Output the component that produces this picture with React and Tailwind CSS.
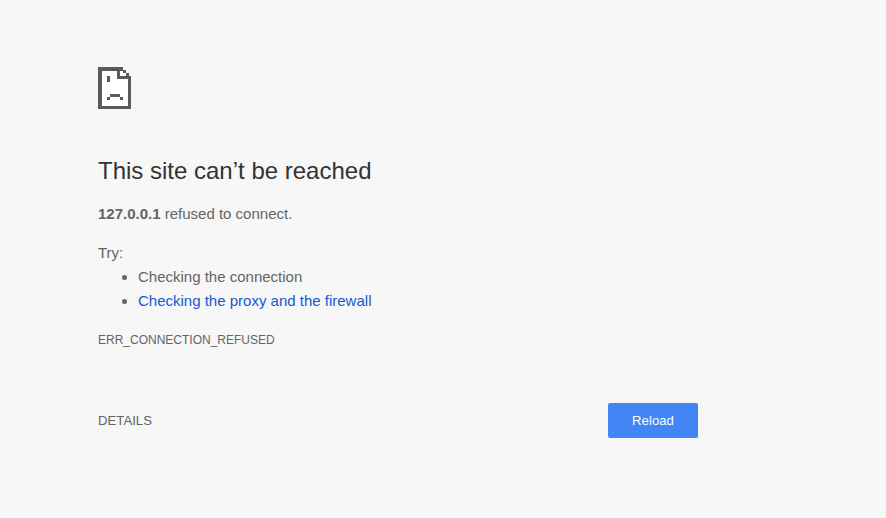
const ICON_RECTS = [
  [0, 0, 25, 4],
  [0, 0, 4, 42],
  [0, 39, 33, 3],
  [30, 9, 3, 33],
  [19, 0, 3, 12],
  [19, 9, 14, 3],
  [25, 3, 3, 3],
  [28, 6, 3, 3],
  [9, 9, 3, 6],
  [12, 27, 10, 3],
  [9, 30, 3, 3],
  [22, 30, 3, 3],
]

export default function App() {
  return (
    <div className="min-h-[518px] bg-[#f7f7f7] pt-[67px] pl-[98px] font-['Liberation_Sans',Arial,sans-serif] text-[15px] leading-[24px] text-[#646464]">
      <div className="w-[600px]">
        <svg className="block" width="33" height="42" viewBox="0 0 33 42" fill="#5a5a5a" shapeRendering="crispEdges">
          <path d="M0 0H25V3H28V6H31V9H33V42H0Z" fill="#ffffff" />
          {ICON_RECTS.map(([x, y, w, h], i) => (
            <rect key={i} x={x} y={y} width={w} height={h} />
          ))}
        </svg>
        <h1 className="mt-[46px] text-[24px] leading-[32px] font-normal text-[#333333]">This site can’t be reached</h1>
        <p className="mt-[15px]">
          <strong className="font-bold">127.0.0.1</strong> refused to connect.
        </p>
        <p className="mt-[15px]">Try:</p>
        <ul className="list-disc pl-[40px]">
          <li>Checking the connection</li>
          <li>
            <a className="text-[#1558d6]" href="#">Checking the proxy and the firewall</a>
          </li>
        </ul>
        <div className="mt-[15px] text-[12px] text-[#646464]">ERR_CONNECTION_REFUSED</div>
        <div className="mt-[51px] flex items-center justify-between">
          <span className="text-[13.2px] text-[#646464]">DETAILS</span>
          <button className="h-[35px] w-[90px] rounded-[2px] bg-[#4285f4] text-[13.2px] text-white">Reload</button>
        </div>
      </div>
    </div>
  )
}
